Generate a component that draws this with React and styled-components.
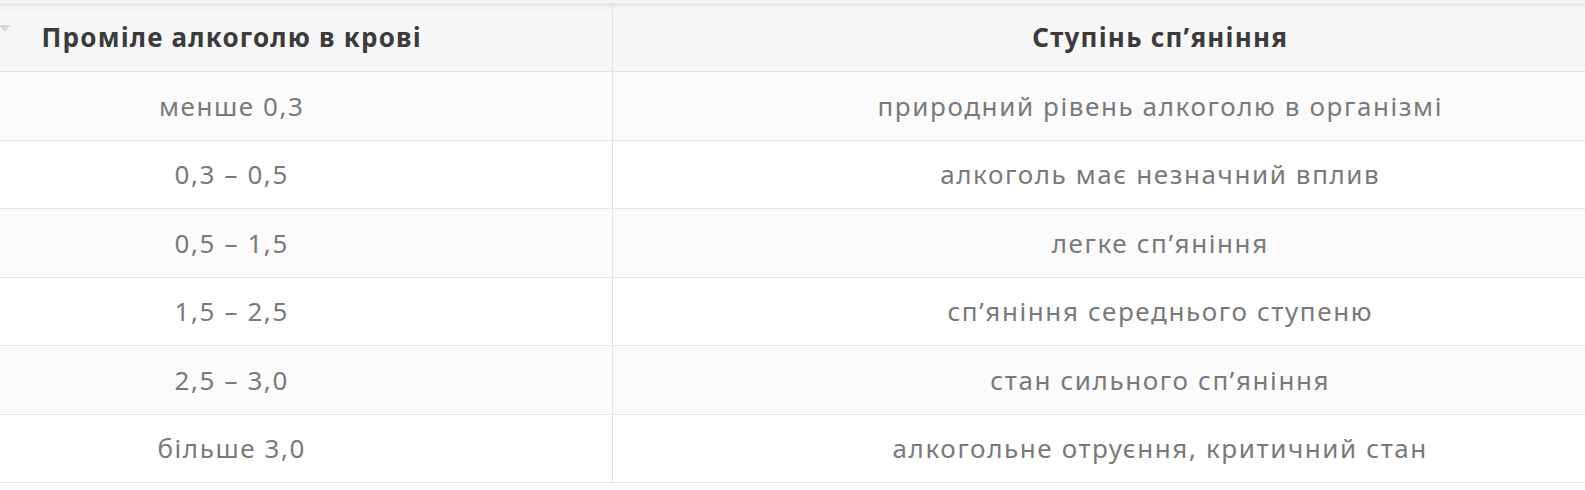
import React from "react";
import styled, { createGlobalStyle } from "styled-components";

const GlobalStyle = createGlobalStyle`
  html, body {
    margin: 0;
    padding: 0;
    background: #ffffff;
    overflow: hidden;
  }
`;

const Viewport = styled.div`
  width: 1585px;
  height: 490px;
  overflow: hidden;
  padding-top: 3px;
  box-sizing: border-box;
  background: linear-gradient(#f4f4f4, #f4f4f4) top / 100% 3px no-repeat, #fff;
`;

const Table = styled.table`
  margin-left: -148px;
  width: 1856px;
  border-collapse: collapse;
  table-layout: fixed;
  font-family: "Noto Sans", "Open Sans", sans-serif;
`;

const HeadCell = styled.th`
  position: relative;
  height: 68px;
  padding: 0;
  font-size: 26px;
  font-weight: 700;
  letter-spacing: 1.2px;
  color: #3b3b3b;
  text-align: center;
  background: linear-gradient(#e4e4e4, #f7f7f7 7px, #f7f7f7);
  border-bottom: 1px solid #e3e3e3;
  border-left: ${(p) => (p.$divider ? "1px solid #e2e2e2" : "none")};
`;

const SortArrow = styled.span`
  position: absolute;
  left: 147px;
  top: 22px;
  width: 0;
  height: 0;
  border-left: 6px solid transparent;
  border-right: 6px solid transparent;
  border-top: 7px solid #dadada;
`;

const Row = styled.tr`
  background: ${(p) => (p.$odd ? "#fbfbfb" : "#ffffff")};
`;

const Cell = styled.td`
  height: 67.5px;
  padding: 0;
  font-size: 26px;
  font-weight: 400;
  letter-spacing: 1.6px;
  color: #7a7a7a;
  text-align: center;
  border-bottom: 1px solid #e6e6e6;
  border-left: ${(p) => (p.$divider ? "1px solid #e2e2e2" : "none")};
`;

const rows = [
  ["менше 0,3", "природний рівень алкоголю в організмі"],
  ["0,3 – 0,5", "алкоголь має незначний вплив"],
  ["0,5 – 1,5", "легке сп’яніння"],
  ["1,5 – 2,5", "сп’яніння середнього ступеню"],
  ["2,5 – 3,0", "стан сильного сп’яніння"],
  ["більше 3,0", "алкогольне отруєння, критичний стан"],
];

export default function App() {
  return (
    <>
      <GlobalStyle />
      <Viewport>
        <Table>
          <colgroup>
            <col style={{ width: "760px" }} />
            <col style={{ width: "1096px" }} />
          </colgroup>
          <thead>
            <tr>
              <HeadCell>
                <SortArrow />
                Проміле алкоголю в крові
              </HeadCell>
              <HeadCell $divider>Ступінь сп’яніння</HeadCell>
            </tr>
          </thead>
          <tbody>
            {rows.map(([level, state], idx) => (
              <Row key={idx} $odd={idx % 2 === 0}>
                <Cell>{level}</Cell>
                <Cell $divider>{state}</Cell>
              </Row>
            ))}
          </tbody>
        </Table>
      </Viewport>
    </>
  );
}
